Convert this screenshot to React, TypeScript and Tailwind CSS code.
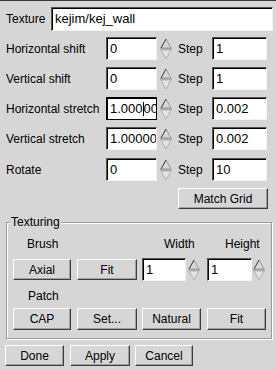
import React from 'react';

const font = { fontFamily: '"Liberation Sans", Arial, sans-serif' };

function Spinner() {
  return (
    <svg width="12" height="22" viewBox="0 0 12 22" className="shrink-0">
      <polygon points="6,1 11,10 1,10" fill="#d6d6d6" stroke="#9a9a9a" strokeWidth="1" />
      <line x1="6" y1="1" x2="1" y2="10" stroke="#4a4a4a" strokeWidth="1" />
      <line x1="0" y1="11" x2="12" y2="11" stroke="#8a8a8a" strokeWidth="1" />
      <polygon points="1,12 11,12 6,21" fill="#e4e4e4" stroke="#b0b0b0" strokeWidth="1" />
    </svg>
  );
}

function Field({ value, w, h = 'h-[23px]', focused = false }: { value: React.ReactNode; w: string; h?: string; focused?: boolean }) {
  return (
    <div
      className={`${w} ${h} bg-white flex items-center pl-[3px] text-[13px] text-black shrink-0 overflow-hidden whitespace-nowrap border ${
        focused
          ? 'border-black shadow-[inset_1px_1px_0_#000]'
          : 'border-t-[#555] border-l-[#555] border-r-[#f4f4f4] border-b-[#f4f4f4] shadow-[inset_1px_1px_0_#000]'
      }`}
    >
      {value}
    </div>
  );
}

function Btn({ label, w, h = 'h-[21px]' }: { label: string; w: string; h?: string }) {
  return (
    <div
      className={`${w} ${h} shrink-0 flex items-center justify-center text-[12px] text-black bg-[#d6d6d6] border border-t-white border-l-white border-r-[#3c3c3c] border-b-[#3c3c3c] shadow-[inset_-1px_-1px_0_#a0a0a0]`}
    >
      {label}
    </div>
  );
}

function Row({ label, value, step, focused, className }: { label: string; value: React.ReactNode; step: string; focused?: boolean; className: string }) {
  return (
    <div className={`flex items-center h-[23px] ${className}`}>
      <span className="w-[106px] shrink-0 pl-[6px] text-[12px] text-black whitespace-nowrap">{label}</span>
      <Field value={value} w="w-[51px]" focused={focused} />
      <div className="ml-[3px]">
        <Spinner />
      </div>
      <span className="ml-[6px] w-[34px] text-[12px] text-black">Step</span>
      <Field value={step} w="w-[55px]" />
    </div>
  );
}

export default function App() {
  return (
    <div style={font} className="w-[276px] h-[370px] bg-[#d6d6d6] border-t border-[#3a3a3a] overflow-hidden">
      <div className="flex items-center h-[24px] mt-[6px]">
        <span className="w-[51px] pl-[6px] text-[12px] text-black">Texture</span>
        <Field value="kejim/kej_wall" w="w-[222px]" h="h-[24px]" />
      </div>

      <Row className="mt-[6px]" label="Horizontal shift" value="0" step="1" />
      <Row className="mt-[7px]" label="Vertical shift" value="0" step="1" />
      <Row
        className="mt-[7px]"
        label="Horizontal stretch"
        focused
        value={
          <span className="flex items-center">
            1.000<span className="inline-block w-px h-[14px] bg-black" />00
          </span>
        }
        step="0.002"
      />
      <Row className="mt-[7px]" label="Vertical stretch" value="1.00000" step="0.002" />
      <Row className="mt-[8px]" label="Rotate" value="0" step="10" />

      <div className="flex mt-[7px] pl-[178px]">
        <Btn label="Match Grid" w="w-[90px]" />
      </div>

      <div className="relative ml-[6px] mt-[13px] w-[266px] border border-[#9a9a9a] shadow-[inset_1px_1px_0_#fff,1px_1px_0_#fff] pl-[6px] pt-[14px] pb-[8px]">
        <span className="absolute left-[3px] top-[-8px] bg-[#d6d6d6] px-[1px] text-[12px] leading-[14px] text-black">Texturing</span>

        <div className="flex h-[14px] items-center text-[12px] text-black">
          <span className="ml-[14px] w-[137px]">Brush</span>
          <span className="w-[61px]">Width</span>
          <span>Height</span>
        </div>

        <div className="flex items-center h-[23px] mt-[7px]">
          <Btn label="Axial" w="w-[58px]" />
          <div className="ml-[6px]">
            <Btn label="Fit" w="w-[60px]" />
          </div>
          <div className="ml-[5px]">
            <Field value="1" w="w-[44px]" />
          </div>
          <div className="ml-[2px]">
            <Spinner />
          </div>
          <div className="ml-[7px]">
            <Field value="1" w="w-[45px]" />
          </div>
          <div className="ml-[1px]">
            <Spinner />
          </div>
        </div>

        <div className="flex h-[14px] items-center mt-[8px] text-[12px] text-black">
          <span className="ml-[15px]">Patch</span>
        </div>

        <div className="flex items-center mt-[5px]">
          <Btn label="CAP" w="w-[58px]" h="h-[22px]" />
          <div className="ml-[6px]">
            <Btn label="Set..." w="w-[60px]" h="h-[22px]" />
          </div>
          <div className="ml-[5px]">
            <Btn label="Natural" w="w-[59px]" h="h-[22px]" />
          </div>
          <div className="ml-[6px]">
            <Btn label="Fit" w="w-[59px]" h="h-[22px]" />
          </div>
        </div>
      </div>

      <div className="flex mt-[6px] pl-[5px]">
        <Btn label="Done" w="w-[59px]" />
        <div className="ml-[6px]">
          <Btn label="Apply" w="w-[60px]" />
        </div>
        <div className="ml-[5px]">
          <Btn label="Cancel" w="w-[58px]" />
        </div>
      </div>
    </div>
  );
}
